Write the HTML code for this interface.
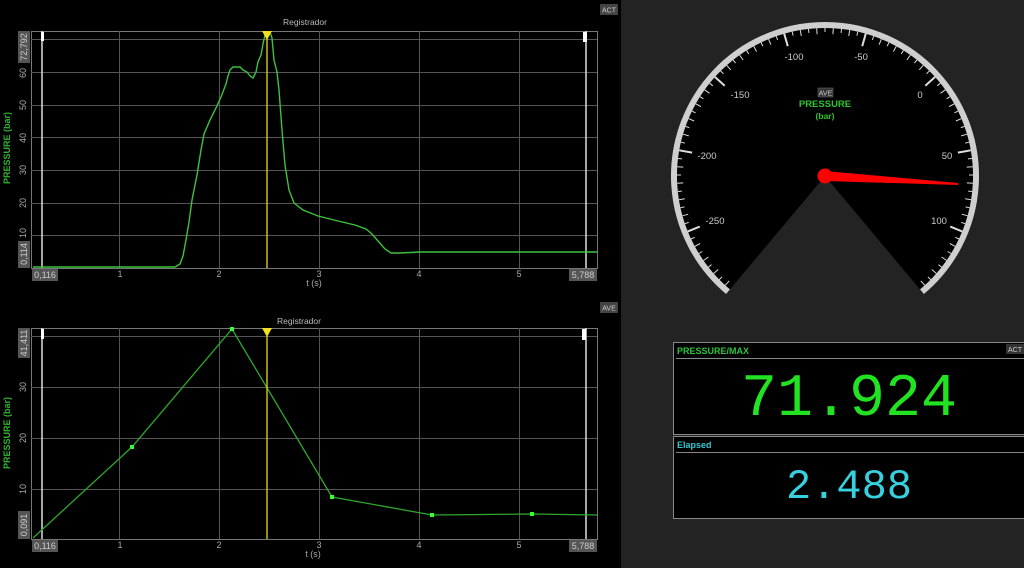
<!DOCTYPE html>
<html><head><meta charset="utf-8"><style>
html,body{margin:0;padding:0;background:#000;width:1024px;height:568px;overflow:hidden;font-family:"Liberation Sans",sans-serif}
</style></head><body>
<svg width="1024" height="568" viewBox="0 0 1024 568" xmlns="http://www.w3.org/2000/svg" font-family="Liberation Sans, sans-serif">
<rect width="1024" height="568" fill="#000"/>
<rect x="621" y="0" width="403" height="568" fill="#232323"/>

<!-- TOP PLOT -->
<g stroke="#555" stroke-width="1" fill="none">
<rect x="31.5" y="31.5" width="566" height="237" stroke="#777"/>
<line x1="31" y1="39.5" x2="597" y2="39.5"/>
<line x1="31" y1="72.5" x2="597" y2="72.5"/>
<line x1="31" y1="105.5" x2="597" y2="105.5"/>
<line x1="31" y1="137.5" x2="597" y2="137.5"/>
<line x1="31" y1="170.5" x2="597" y2="170.5"/>
<line x1="31" y1="203.5" x2="597" y2="203.5"/>
<line x1="31" y1="235.5" x2="597" y2="235.5"/>
<line x1="119.5" y1="31" x2="119.5" y2="268"/>
<line x1="219.5" y1="31" x2="219.5" y2="268"/>
<line x1="319.5" y1="31" x2="319.5" y2="268"/>
<line x1="419.5" y1="31" x2="419.5" y2="268"/>
<line x1="519.5" y1="31" x2="519.5" y2="268"/>
</g>
<line x1="42" y1="31" x2="42" y2="268" stroke="#ddd" stroke-width="1.5"/>
<line x1="586" y1="31" x2="586" y2="268" stroke="#ddd" stroke-width="1.5"/>
<rect x="41" y="32" width="3" height="9" fill="#fff"/>
<rect x="583" y="32" width="4" height="10" fill="#fff"/>
<polyline fill="none" stroke="#3ec23e" stroke-width="1.4" points="33,267 175,267 180,264 183,256 186,240 189,222 192,200 197,175 201,150 204,134 210,120 216,108 221,97 226,84 228,76 230,70 233,67 240,67 243,70 247,72 250,76 253,78 256,72 258,62 261,55 263,44 265,35 267,32 270,32 272,38 274,60 277,72 279,90 282,130 285,165 289,190 294,203 303,210 318,216 338,221 355,225 366,229 372,234 378,241 385,249 391,253 400,253 420,252 460,252 597,252"/>
<line x1="267" y1="31" x2="267" y2="268" stroke="#e6d81a" stroke-width="1.3"/>
<polygon points="262,31 272,31 267,40" fill="#f0e020"/>
<text x="305" y="25" fill="#bbb" font-size="8.5" text-anchor="middle">Registrador</text>
<rect x="600" y="4" width="18" height="11" fill="#444"/><text x="609" y="12.5" fill="#ccc" font-size="7" text-anchor="middle">ACT</text>
<g fill="#aaa" font-size="9" text-anchor="middle">
<text x="120" y="277">1</text><text x="219" y="277">2</text><text x="319" y="277">3</text><text x="419" y="277">4</text><text x="519" y="277">5</text>
<text x="314" y="286" font-size="9">t (s)</text>
</g>
<rect x="32" y="269" width="26" height="12" fill="#555"/><text x="45" y="278" fill="#ccc" font-size="9" text-anchor="middle">0,116</text>
<rect x="569" y="269" width="28" height="12" fill="#555"/><text x="583" y="278" fill="#ccc" font-size="9" text-anchor="middle">5,788</text>
<g fill="#aaa" font-size="9" text-anchor="middle">
<text transform="translate(26,203) rotate(-90)">20</text>
<text transform="translate(26,170) rotate(-90)">30</text>
<text transform="translate(26,138) rotate(-90)">40</text>
<text transform="translate(26,105) rotate(-90)">50</text>
<text transform="translate(26,73) rotate(-90)">60</text>
</g>
<rect x="18" y="31" width="12" height="32" fill="#555"/><text transform="translate(27,47) rotate(-90)" fill="#ccc" font-size="9" text-anchor="middle">72,792</text>
<rect x="18" y="241" width="12" height="27" fill="#555"/><text transform="translate(27,254) rotate(-90)" fill="#ccc" font-size="9" text-anchor="middle">0,114</text>
<text transform="translate(26,238) rotate(-90)" fill="#aaa" font-size="9" text-anchor="start">10</text>
<text transform="translate(10,148) rotate(-90)" fill="#2fb52f" font-size="9" font-weight="bold" text-anchor="middle">PRESSURE (bar)</text>

<!-- BOTTOM PLOT -->
<g stroke="#555" stroke-width="1" fill="none">
<rect x="31.5" y="328.5" width="566" height="211" stroke="#777"/>
<line x1="31" y1="336.5" x2="597" y2="336.5"/>
<line x1="31" y1="387.5" x2="597" y2="387.5"/>
<line x1="31" y1="438.5" x2="597" y2="438.5"/>
<line x1="31" y1="489.5" x2="597" y2="489.5"/>
<line x1="119.5" y1="328" x2="119.5" y2="539"/>
<line x1="219.5" y1="328" x2="219.5" y2="539"/>
<line x1="319.5" y1="328" x2="319.5" y2="539"/>
<line x1="419.5" y1="328" x2="419.5" y2="539"/>
<line x1="519.5" y1="328" x2="519.5" y2="539"/>
</g>
<line x1="42" y1="328" x2="42" y2="539" stroke="#ddd" stroke-width="1.5"/>
<line x1="586" y1="328" x2="586" y2="539" stroke="#ddd" stroke-width="1.5"/>
<rect x="41" y="329" width="3" height="10" fill="#fff"/>
<rect x="582" y="329" width="4" height="11" fill="#fff"/>
<polyline fill="none" stroke="#2ea82e" stroke-width="1.3" points="33,538 132,447 232,329 332,497 432,515 532,514 597,515"/>
<g fill="#3f3"><rect x="130" y="445" width="4" height="4"/><rect x="230" y="327" width="4" height="4"/><rect x="330" y="495" width="4" height="4"/><rect x="430" y="513" width="4" height="4"/><rect x="530" y="512" width="4" height="4"/></g>
<line x1="267" y1="328" x2="267" y2="539" stroke="#e6d81a" stroke-width="1.3"/>
<polygon points="262,328 272,328 267,337" fill="#f0e020"/>
<text x="299" y="324" fill="#bbb" font-size="8.5" text-anchor="middle">Registrador</text>
<rect x="600" y="302" width="18" height="11" fill="#444"/><text x="609" y="310.5" fill="#ccc" font-size="7" text-anchor="middle">AVE</text>
<g fill="#aaa" font-size="9" text-anchor="middle">
<text x="120" y="548">1</text><text x="219" y="548">2</text><text x="319" y="548">3</text><text x="419" y="548">4</text><text x="519" y="548">5</text>
<text x="313" y="557">t (s)</text>
</g>
<rect x="32" y="540" width="26" height="12" fill="#555"/><text x="45" y="549" fill="#ccc" font-size="9" text-anchor="middle">0,116</text>
<rect x="569" y="540" width="28" height="12" fill="#555"/><text x="583" y="549" fill="#ccc" font-size="9" text-anchor="middle">5,788</text>
<g fill="#aaa" font-size="9" text-anchor="middle">
<text transform="translate(26,489) rotate(-90)">10</text>
<text transform="translate(26,438) rotate(-90)">20</text>
<text transform="translate(26,387) rotate(-90)">30</text>
</g>
<rect x="18" y="328" width="12" height="30" fill="#555"/><text transform="translate(27,343) rotate(-90)" fill="#ccc" font-size="9" text-anchor="middle">41,411</text>
<rect x="18" y="511" width="12" height="28" fill="#555"/><text transform="translate(27,525) rotate(-90)" fill="#ccc" font-size="9" text-anchor="middle">0,091</text>
<text transform="translate(10,433) rotate(-90)" fill="#2fb52f" font-size="9" font-weight="bold" text-anchor="middle">PRESSURE (bar)</text>

<!-- GAUGE -->
<path d="M825,176 L728,291.7 A151,151 0 1 1 922,291.7 Z" fill="#000"/>
<path d="M728,291.7 A151,151 0 1 1 922,291.7" fill="none" stroke="#cfcfcf" stroke-width="6"/>
<g id="ticks" stroke="#ddd"></g>
<g fill="#ccc" font-size="9.5" text-anchor="middle">
<text x="794" y="60">-100</text><text x="861" y="60">-50</text>
<text x="740" y="98">-150</text><text x="920" y="98">0</text>
<text x="707" y="159">-200</text><text x="947" y="159">50</text>
<text x="715" y="224">-250</text><text x="939" y="224">100</text>
</g>
<rect x="818" y="88" width="15" height="9" fill="#333" stroke="#777" stroke-width="0.5"/><text x="825.5" y="95.5" fill="#ccc" font-size="7" text-anchor="middle">AVE</text>
<text x="825" y="107" fill="#2ec42e" font-size="9.5" font-weight="bold" text-anchor="middle">PRESSURE</text>
<text x="825" y="119" fill="#2ec42e" font-size="8.5" font-weight="bold" text-anchor="middle">(bar)</text>
<polygon points="825,171 958,183 958,185 825,181" fill="#f00"/>
<circle cx="825" cy="176" r="7.5" fill="#f00"/>

<!-- DISPLAYS -->
<rect x="673.5" y="342.5" width="355" height="92" fill="#000" stroke="#888"/>
<line x1="676" y1="358.5" x2="1024" y2="358.5" stroke="#888"/>
<text x="677" y="354" fill="#2ec43a" font-size="9" font-weight="bold">PRESSURE/MAX</text>
<rect x="1006" y="344" width="18" height="10" fill="#333"/><text x="1015" y="352" fill="#ccc" font-size="7" text-anchor="middle">ACT</text>
<text x="849" y="415" fill="#22e322" font-size="60" font-family="Liberation Mono, monospace" text-anchor="middle">71.924</text>
<rect x="673.5" y="436.5" width="355" height="82" fill="#000" stroke="#888"/>
<line x1="676" y1="452.5" x2="1024" y2="452.5" stroke="#888"/>
<text x="677" y="448" fill="#37c6cf" font-size="9" font-weight="bold">Elapsed</text>
<text x="849" y="498" fill="#37d0de" font-size="42" font-family="Liberation Mono, monospace" text-anchor="middle">2.488</text>
</svg>
<script>
var g=document.getElementById('ticks'),s='';
for(var v=-310;v<=160;v+=5){var a=-112+(v+250)*0.64;if(a<-139||a>139)continue;
var maj=(v%50===0),r1=148,r2=maj?135:(v%10===0?142:144);var t=a*Math.PI/180;
var sx=825+r1*Math.sin(t),sy=176-r1*Math.cos(t),ex=825+r2*Math.sin(t),ey=176-r2*Math.cos(t);
s+='<line x1="'+sx.toFixed(1)+'" y1="'+sy.toFixed(1)+'" x2="'+ex.toFixed(1)+'" y2="'+ey.toFixed(1)+'" stroke-width="'+(maj?2:1)+'"/>';}
g.innerHTML=s;
</script>
</body></html>
